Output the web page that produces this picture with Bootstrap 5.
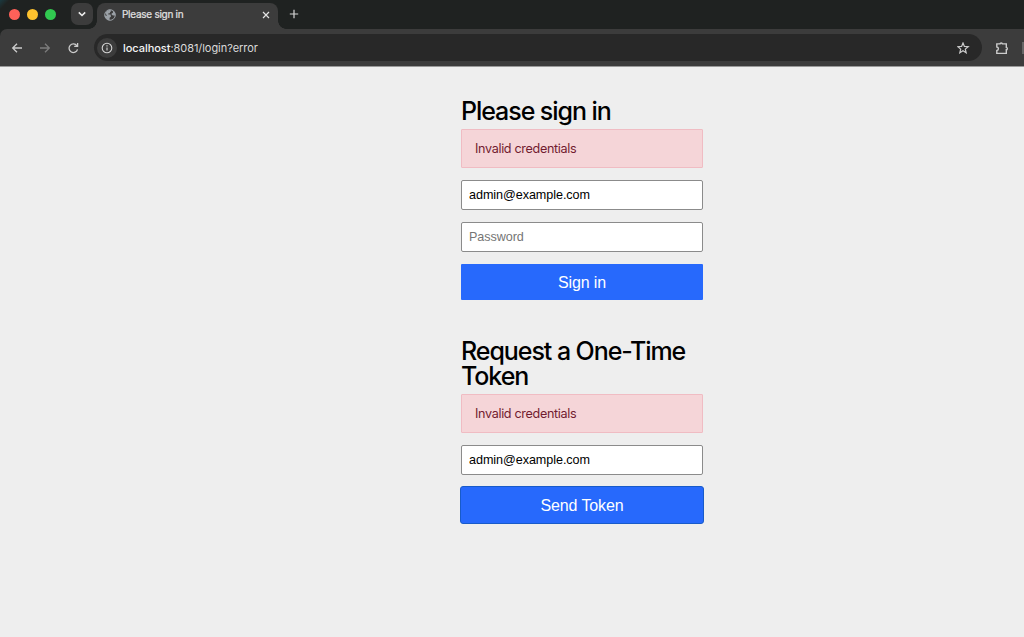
<!DOCTYPE html>
<html lang="en">
<head>
<meta charset="utf-8">
<meta name="viewport" content="width=device-width, initial-scale=1">
<title>Please sign in</title>
<link href="https://cdn.jsdelivr.net/npm/bootstrap@5.3.0/dist/css/bootstrap.min.css" rel="stylesheet">
<style>
body{background:#eee;font-family:Inter,"Liberation Sans",sans-serif;color:#000;height:637px;overflow:hidden}
svg{display:block;flex:none}
.tabstrip{height:29px;background:linear-gradient(135deg,#1b3a40 0,#1f2221 7px);padding-left:9px}
.lights{height:28px}
.light{width:11px;height:11px;border-radius:50%;margin-right:7px}
.light-close{background:#ff6159}
.light-min{background:#fdc22e}
.light-max{background:#31c950}
.tabsearch{width:22px;height:22px;border-radius:7px;background:#3c3c3c;margin:3px 0 0 8px}
.browsertab{width:181px;height:26px;background:#3c3c3c;border-radius:8px 8px 0 0;margin:3px 0 0 4px;padding:0 7px 3px;font-size:10px;color:#e3e3e3}
.browsertab:before,.browsertab:after{content:"";position:absolute;bottom:0;width:8px;height:8px}
.browsertab:before{left:-8px;background:radial-gradient(circle at 0 0,transparent 7.5px,#3c3c3c 8px)}
.browsertab:after{right:-8px;background:radial-gradient(circle at 100% 0,transparent 7.5px,#3c3c3c 8px)}
.tabtitle{margin-left:6px;letter-spacing:-.27px;-webkit-text-stroke:.2px}
.newtab{margin:9px 0 0 11px}
.toolbar{height:38px;background:#3c3c3c;border-bottom:1px solid #999;padding-left:11px;border-top-left-radius:7px}
.stripedge{background:#1f2221}
.addressbar{width:888px;height:27px;border-radius:14px;background:#282828;margin-left:14px;padding:0 12px 0 3px;font-size:11px;color:#dadada;flex:none}
.siteinfo{width:20px;height:20px;border-radius:50%;background:#3c3c3c}
.url{margin-left:6px;padding-top:1px;letter-spacing:-.05px}
.url b{font-weight:500;color:#f4f4f4}
.overflowbtn{width:2px;height:12px;background:#666;margin-left:13px}
.signin{width:242px;margin-left:461px}
.signin form:first-child{padding-top:32px}
.signin form+form{padding-top:39px}
.signin h2{font-size:25px;line-height:25px;font-weight:500;letter-spacing:-1.06px;margin:0 0 5px;white-space:nowrap}
.signin .alert{height:39px;padding:1px 13px 0;border:1px solid #f0bcc3;border-radius:1px;background:#f5d5d8;color:#721c30;font-size:12.6px;letter-spacing:-.33px;margin-bottom:12px}
.signin .form-control{height:30px;margin-bottom:12px;padding:0 7px;border:1px solid #8b8b8b;border-radius:2px;background:#fff;color:#000;font:12.6px/28px "Liberation Sans",sans-serif;letter-spacing:-.06px;box-shadow:none}
.signin .form-control::placeholder{color:#757575;opacity:1}
.signin .btn{height:36px;background:#2769fc;color:#fff;border:0;border-radius:1px;padding:1px 0 0;font:16px/35px "Liberation Sans",sans-serif;letter-spacing:-.1px}
.signin .btn.outlined{width:244px;height:38px;margin:-1px 0 0 -1px;border:1px solid #185bc9;border-radius:3px}
</style>
</head>
<body>
<header>
  <div class="tabstrip d-flex">
    <div class="lights d-flex align-items-center">
      <span class="light light-close"></span><span class="light light-min"></span><span class="light light-max"></span>
    </div>
    <div class="tabsearch d-flex align-items-center justify-content-center"><svg width="10" height="10" fill="none" stroke="#eee" stroke-width="1.6"><path d="M1.8 3.4 5 6.5 8.2 3.4"/></svg></div>
    <div class="browsertab d-flex align-items-center position-relative">
      <svg width="12" height="12" viewBox="0 0 12 12"><circle cx="6" cy="6" r="5.3" fill="#3c3c3c" stroke="#9aa0a6" stroke-width="1"/><path fill="#9aa0a6" d="M5.8.7 7.4 1.8 6 3.2 5.9 4.3 4.2 4.6 4.4 5.6H6.5L7 7.4 5.6 8.7V11.2C2.5 10.8.7 8.7.7 6.2L3 6.9 1.4 4Q2.6 1 5.8.7ZM8.8 1.5c2 1.1 2.8 3 2.5 5L9.5 6.6 7.8 6 7.6 4.4 9 3.7Z"/></svg>
      <span class="tabtitle">Please sign in</span>
      <svg class="ms-auto" width="10" height="10" stroke="#e3e3e3" stroke-width="1.2"><path d="m2 2 6 6M8 2 2 8"/></svg>
    </div>
    <svg class="newtab" width="10" height="10" stroke="#d5d5d5" stroke-width="1.2"><path d="M5 .8v8.4M.8 5h8.4"/></svg>
  </div>
  <div class="stripedge"><div class="toolbar d-flex align-items-center">
    <svg width="12" height="12" fill="none" stroke="#ccc" stroke-width="1.3"><path d="M11 6H1.7M6 1.7 1.7 6 6 10.3"/></svg>
    <svg class="ms-3" width="12" height="12" fill="none" stroke="#7c7c7c" stroke-width="1.3"><path d="M1 6h9.3M6 1.7 10.3 6 6 10.3"/></svg>
    <svg class="ms-3" width="13" height="12" fill="none" stroke="#ccc" stroke-width="1.3"><path d="M9.9 3.8A4.3 4.3 0 1 0 10.5 7.3M10.6 1v3.4H7.2"/></svg>
    <div class="addressbar d-flex align-items-center">
      <span class="siteinfo d-flex align-items-center justify-content-center"><svg width="12" height="12" fill="none" stroke="#d5d5d5" stroke-width="1.1"><circle cx="6" cy="6" r="4.8"/><path d="M6 5.4v3.2M6 3.2v1.3"/></svg></span>
      <span class="url"><b>localhost</b>:8081/login?error</span>
      <svg class="ms-auto" width="13" height="12" fill="none" stroke="#ccc" stroke-width="1.2"><path d="M6 1 7.4 4.4 11.2 4.7 8.3 7.1 9.2 10.8 6 8.8 2.8 10.8 3.7 7.1.8 4.7 4.6 4.4Z"/></svg>
    </div>
    <svg style="margin-left:14px" width="13" height="14" viewBox="2 0 13 14" fill="none" stroke="#ccc" stroke-width="1.4"><path d="M2.8 2.9H6Q6 2 7.2 2T8.4 2.9h3.9v3.5q1 0 1 1.2t-1 1.2v3.6H2.8V9.5q1.6-.3 1.6-1.8T2.8 6Z"/></svg>
    <span class="overflowbtn"></span>
  </div></div>
</header>
<main class="signin">
  <form>
    <h2>Please sign in</h2>
    <div class="alert d-flex align-items-center">Invalid credentials</div>
    <input class="form-control" aria-label="Username" value="admin@example.com">
    <input class="form-control" type="password" placeholder="Password">
    <button type="button" class="btn w-100 d-block">Sign in</button>
  </form>
  <form>
    <h2>Request a One-Time<br>Token</h2>
    <div class="alert d-flex align-items-center">Invalid credentials</div>
    <input class="form-control" aria-label="Username" value="admin@example.com">
    <button type="button" class="btn outlined d-block">Send Token</button>
  </form>
</main>
<script src="https://cdn.jsdelivr.net/npm/bootstrap@5.3.0/dist/js/bootstrap.bundle.min.js"></script>
</body>
</html>
